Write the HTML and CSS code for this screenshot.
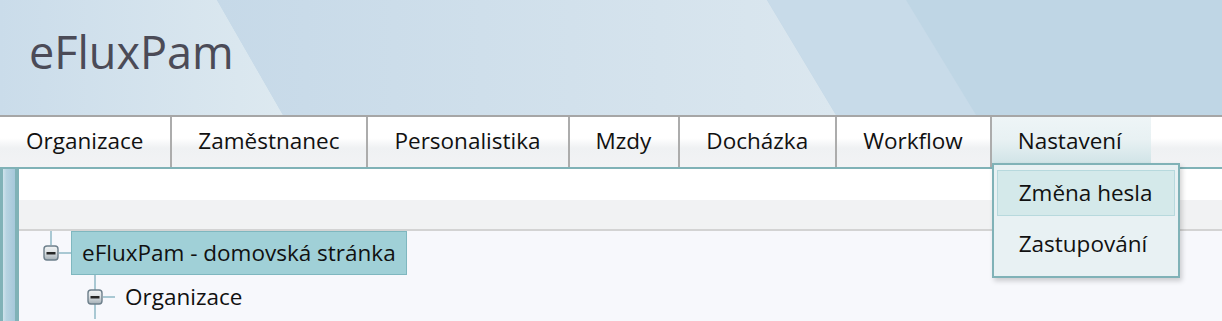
FILE: index.html
```html
<!DOCTYPE html>
<html lang="cs">
<head>
    <meta charset="UTF-8">
    <title>eFluxPam</title>
    <link rel="stylesheet" href="styles.css">
</head>
<body>

    <!-- Header with the application name -->
    <div class="header">
        <svg class="header-bg" viewBox="0 0 1222 115" preserveAspectRatio="none">
            <defs>
                <linearGradient id="band1" x1="0" x2="1" y1="0" y2="0">
                    <stop offset="0" stop-color="#cadcea"/>
                    <stop offset="1" stop-color="#dde9f0"/>
                </linearGradient>
                <linearGradient id="band2" x1="0" x2="1" y1="0" y2="0">
                    <stop offset="0" stop-color="#c6d9e8"/>
                    <stop offset="1" stop-color="#dbe7ef"/>
                </linearGradient>
            </defs>
            <rect x="0" y="0" width="1222" height="115" fill="#bfd6e5"/>
            <polygon points="0,0 217,0 283,115 0,115" fill="url(#band1)"/>
            <polygon points="217,0 767,0 836,115 283,115" fill="url(#band2)"/>
            <polygon points="767,0 906,0 976,115 836,115" fill="#c8dbe9"/>
        </svg>
        <h1 class="app-title">eFluxPam</h1>
    </div>

    <!-- Main menu -->
    <div class="menu-bar">
        <div class="menu-item">Organizace</div>
        <div class="menu-item">Zaměstnanec</div>
        <div class="menu-item">Personalistika</div>
        <div class="menu-item">Mzdy</div>
        <div class="menu-item">Docházka</div>
        <div class="menu-item">Workflow</div>
        <div class="menu-item active">
            Nastavení
            <!-- Open submenu -->
            <div class="submenu">
                <div class="submenu-item hover">Změna hesla</div>
                <div class="submenu-item">Zastupování</div>
            </div>
        </div>
    </div>

    <div class="main">
        <div class="side-strip"></div>

        <div class="content">
            <div class="toolbar"></div>
            <div class="toolbar-gray"></div>

            <!-- Navigation tree -->
            <div class="tree">
                <div class="tree-row root">
                    <svg class="toggle" width="16" height="16" viewBox="0 0 16 16">
                        <defs>
                            <linearGradient id="tg" x1="0" x2="0" y1="0" y2="1">
                                <stop offset="0" stop-color="#f2f4f5"/>
                                <stop offset="0.45" stop-color="#dde2e5"/>
                                <stop offset="1" stop-color="#a3aeb5"/>
                            </linearGradient>
                        </defs>
                        <rect x="1" y="1" width="14" height="14" rx="3" fill="url(#tg)" stroke="#6d7f8b" stroke-width="1.4"/>
                        <rect x="3.5" y="7" width="9" height="2.5" fill="#262626"/>
                    </svg>
                    <span class="connector"></span>
                    <span class="node-label selected">eFluxPam - domovská stránka</span>
                </div>
                <div class="tree-children">
                    <div class="tree-row child">
                        <svg class="toggle" width="16" height="16" viewBox="0 0 16 16">
                            <rect x="1" y="1" width="14" height="14" rx="3" fill="url(#tg)" stroke="#6d7f8b" stroke-width="1.4"/>
                            <rect x="3.5" y="7" width="9" height="2.5" fill="#262626"/>
                        </svg>
                        <span class="connector"></span>
                        <span class="node-label">Organizace</span>
                    </div>
                </div>
            </div>
        </div>
    </div>

</body>
</html>
```

FILE: styles.css
```css
/* Basic page styling */
body {
    margin: 0;
    padding: 0;
    font-family: "Open Sans", "Noto Sans", sans-serif;
    color: #111;
    background-color: #f7f8fc;
    overflow: hidden;
}

/* Header */
.header {
    position: relative;
    height: 115px;
    overflow: hidden;
}

.header-bg {
    position: absolute;
    left: 0;
    top: 0;
    width: 100%;
    height: 100%;
}

.app-title {
    position: relative;
    margin: 0;
    padding: 22px 0 0 29px;
    font-size: 45px;
    font-weight: 400;
    color: #4b4b57;
    line-height: 60px;
}

/* Menu bar */
.menu-bar {
    display: flex;
    height: 50px;
    border-top: 2px solid #a6a6a6;
    border-bottom: 2px solid #80b2b7;
    background: linear-gradient(#ffffff 0%, #ffffff 42%, #eff1f3 62%, #f2f3f5 100%);
}

.menu-item {
    position: relative;
    padding: 0 27px 0 26px;
    line-height: 48px;
    font-size: 22.5px;
    border-right: 2px solid #acacac;
    white-space: nowrap;
}

.menu-item.active {
    border-right: none;
    padding-right: 29px;
    background: linear-gradient(#eef5f7 0%, #e8f1f3 45%, #cde2e5 100%);
}

/* Submenu under Nastavení */
.submenu {
    position: absolute;
    left: 0;
    top: 46px;
    width: 178px;
    padding: 5px 3px 4px 3px;
    background-color: #e8f1f3;
    border: 2px solid #80b2b7;
    box-shadow: 2px 3px 5px rgba(0, 0, 0, 0.18);
    z-index: 2;
}

.submenu-item {
    height: 44px;
    line-height: 44px;
    padding-left: 21px;
    border: 1px solid transparent;
    margin-bottom: 5px;
}

.submenu-item.hover {
    background-color: #d4e9ea;
    border-color: #b7d9dd;
}

/* Main area */
.main {
    display: flex;
    height: 200px;
}

.side-strip {
    width: 12px;
    border-left: 3px solid #80b2b7;
    border-right: 4px solid #80b2b7;
    background: linear-gradient(to right, #cfe3ec 0%, #b6d3e1 30%, #a6c8da 100%);
}

.content {
    flex: 1;
}

.toolbar {
    height: 31px;
    background-color: #ffffff;
}

.toolbar-gray {
    height: 29px;
    background-color: #f1f2f3;
    border-bottom: 2px solid #d3d3d3;
}

/* Tree */
.tree {
    padding-left: 24px;
    font-size: 22.5px;
}

.tree-row {
    position: relative;
    display: flex;
    align-items: center;
    height: 44px;
}

.tree-row .toggle {
    position: relative;
    flex-shrink: 0;
}

.tree-row .connector {
    width: 12px;
    height: 2px;
    background-color: #a9c8d3;
}

.tree-row.root::before {
    content: "";
    position: absolute;
    left: 7px;
    top: 0;
    height: 14px;
    border-left: 2px solid #a9c8d3;
}

.tree-children {
    padding-left: 44px;
}

.tree-row.child::before {
    content: "";
    position: absolute;
    left: 7px;
    top: 0;
    bottom: 0;
    border-left: 2px solid #a9c8d3;
}

.tree-row.child .connector {
    margin-right: 10px;
}

.node-label {
    line-height: 42px;
}

.node-label.selected {
    padding: 0 10px;
    background-color: #a0d0d7;
    border: 1px solid #7fb7bf;
}
```
